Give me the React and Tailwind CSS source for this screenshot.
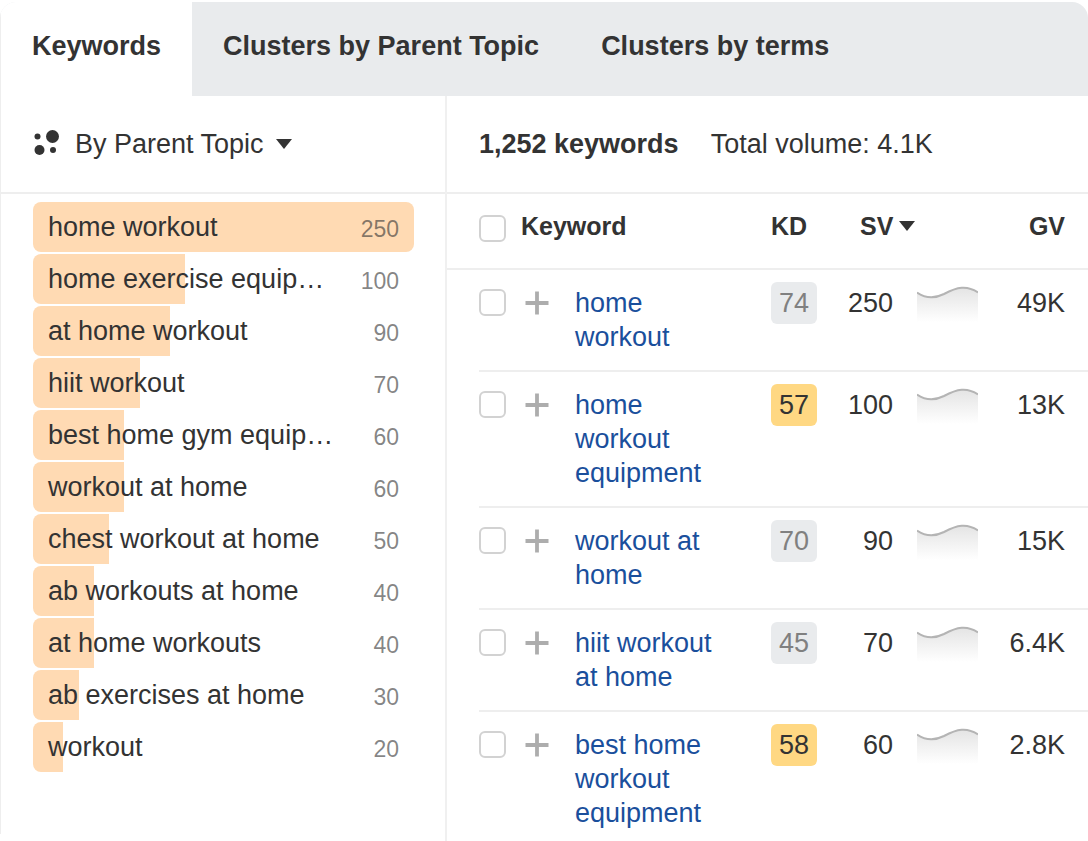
import React, { useState } from 'react';

const tabs = ['Keywords', 'Clusters by Parent Topic', 'Clusters by terms'];

const topics = [
  { name: 'home workout', count: 250 },
  { name: 'home exercise equip…', count: 100 },
  { name: 'at home workout', count: 90 },
  { name: 'hiit workout', count: 70 },
  { name: 'best home gym equip…', count: 60 },
  { name: 'workout at home', count: 60 },
  { name: 'chest workout at home', count: 50 },
  { name: 'ab workouts at home', count: 40 },
  { name: 'at home workouts', count: 40 },
  { name: 'ab exercises at home', count: 30 },
  { name: 'workout', count: 20 },
];

const keywords = [
  { keyword: 'home workout', kd: 74, sv: 250, gv: '49K' },
  { keyword: 'home workout equipment', kd: 57, sv: 100, gv: '13K', highlight: true },
  { keyword: 'workout at home', kd: 70, sv: 90, gv: '15K' },
  { keyword: 'hiit workout at home', kd: 45, sv: 70, gv: '6.4K' },
  { keyword: 'best home workout equipment', kd: 58, sv: 60, gv: '2.8K', highlight: true },
];

const maxCount = 250;

const Caret = () => (
  <svg width="16" height="10" viewBox="0 0 16 10" aria-hidden="true">
    <path d="M0 0h16L8 10z" fill="#333" />
  </svg>
);

const ClusterIcon = () => (
  <svg width="28" height="28" viewBox="0 0 28 28" fill="#333" aria-hidden="true">
    <circle cx="4.5" cy="6.5" r="3" />
    <circle cx="19.5" cy="6.5" r="6.5" />
    <circle cx="6.5" cy="20" r="5" />
    <circle cx="20" cy="20" r="3" />
  </svg>
);

const PlusIcon = () => (
  <svg width="24" height="24" viewBox="0 0 24 24" aria-hidden="true">
    <path d="M12 0.5v23M0.5 12h23" stroke="#adadad" strokeWidth="3.8" />
  </svg>
);

const Trend = ({ id }) => (
  <svg width="61" height="36" viewBox="0 0 61 36" className="block" aria-hidden="true">
    <defs>
      <linearGradient id={id} x1="0" y1="0" x2="0" y2="1">
        <stop offset="0" stopColor="#e4e4e4" />
        <stop offset="1" stopColor="#fff" />
      </linearGradient>
    </defs>
    <path d="M0 6.5C8 12 17 13 27 8C40 1 50-1 61 6.5V36H0Z" fill={`url(#${id})`} />
    <path d="M0 6.5C8 12 17 13 27 8C40 1 50-1 61 6.5" fill="none" stroke="#b4b4b4" strokeWidth="2" />
  </svg>
);

const Checkbox = ({ label }) => (
  <input
    type="checkbox"
    aria-label={label}
    className="block size-[27px] appearance-none rounded-md border-2 border-[#d2d2d2] bg-white checked:bg-[#1a4f9c]"
  />
);

const App = () => {
  const [activeTab, setActiveTab] = useState('Keywords');

  return (
    <div className="flex min-h-screen flex-col overflow-hidden bg-white pt-0.5 font-['Liberation_Sans',Arial,sans-serif] text-[27px] leading-[34px] text-[#333]">
      <div role="tablist" className="flex h-[94px] shrink-0 overflow-hidden rounded-t-2xl bg-[#e9ebed]">
        {tabs.map((tab) => (
          <button
            key={tab}
            role="tab"
            aria-selected={activeTab === tab}
            onClick={() => setActiveTab(tab)}
            className={`px-[31px] pb-1.5 font-bold whitespace-nowrap ${
              activeTab === tab ? 'border-l border-[#eee] bg-white' : ''
            }`}
          >
            {tab}
          </button>
        ))}
      </div>

      <div className="flex flex-1">
        <aside className="flex w-[447px] shrink-0 flex-col border-r-2 border-[#f0f0f0]">
          <div className="mb-3 flex-1 border-l border-[#eee]">
            <div className="flex h-[98px] items-center border-b-2 border-[#eee] pl-8">
              <button className="flex items-center whitespace-nowrap">
                <ClusterIcon />
                <span className="mr-3 ml-3.5">By Parent Topic</span>
                <Caret />
              </button>
            </div>
            <ul className="flex flex-col gap-0.5 pt-2 pr-[31px] pl-8">
              {topics.map((topic) => (
                <li key={topic.name} className="relative h-[50px] overflow-hidden rounded-lg">
                  <div
                    className="absolute inset-y-0 left-0 bg-[#ffdab3]"
                    style={{ width: `${(topic.count / maxCount) * 100}%` }}
                  />
                  <a href="#" className="relative flex h-full items-center justify-between px-[15px] whitespace-nowrap">
                    <span>{topic.name}</span>
                    <span className="pt-1 text-[23px] text-[#333]/60">{topic.count}</span>
                  </a>
                </li>
              ))}
            </ul>
          </div>
        </aside>

        <main className="min-w-0 flex-1">
          <div className="flex h-[98px] items-center gap-8 border-b-2 border-[#eee] pl-8 whitespace-nowrap">
            <span className="font-bold">1,252 keywords</span>
            <span>Total volume: 4.1K</span>
          </div>

          <table className="w-full table-fixed border-separate border-spacing-0">
            <colgroup>
              <col className="w-8" />
              <col className="w-[42px]" />
              <col className="w-[54px]" />
              <col />
              <col className="w-[46px]" />
              <col className="w-[76px]" />
              <col className="w-[85px]" />
              <col className="w-[87px]" />
              <col className="w-[23px]" />
            </colgroup>
            <thead>
              <tr className="h-[76px] text-left text-[25px] *:border-b-2 *:border-[#eee] *:pb-2.5">
                <td />
                <td><div className="pt-1"><Checkbox label="Select all keywords" /></div></td>
                <th colSpan={2}>Keyword</th>
                <th>KD</th>
                <th colSpan={2} className="pl-[43px]">
                  <button className="flex items-center gap-1.5">
                    SV
                    <Caret />
                  </button>
                </th>
                <th className="text-right">GV</th>
                <td />
              </tr>
            </thead>
            <tbody className="*:last:*:border-b-0">
              {keywords.map((row, i) => (
                <tr key={row.keyword} className="align-top *:border-b-2 *:border-[#eee] *:py-4 *:first:border-b-0">
                  <td />
                  <td><div className="pt-[3px]"><Checkbox label={row.keyword} /></div></td>
                  <td>
                    <button aria-label={`Add ${row.keyword}`} className="flex h-[34px] items-center pl-1">
                      <PlusIcon />
                    </button>
                  </td>
                  <td>
                    <a href="#" className="block pr-10 text-[#1a4f9c]">{row.keyword}</a>
                  </td>
                  <td>
                    <div
                      className={`-my-1 flex h-[42px] items-center justify-center rounded-md ${
                        row.highlight ? 'bg-[#ffd883]' : 'bg-[#e9ebed] text-[#808080]'
                      }`}
                    >
                      {row.kd}
                    </div>
                  </td>
                  <td className="text-right">{row.sv}</td>
                  <td className="pl-6"><Trend id={`trend-${i}`} /></td>
                  <td className="text-right">{row.gv}</td>
                  <td />
                </tr>
              ))}
            </tbody>
          </table>
        </main>
      </div>
    </div>
  );
};

export default App;
